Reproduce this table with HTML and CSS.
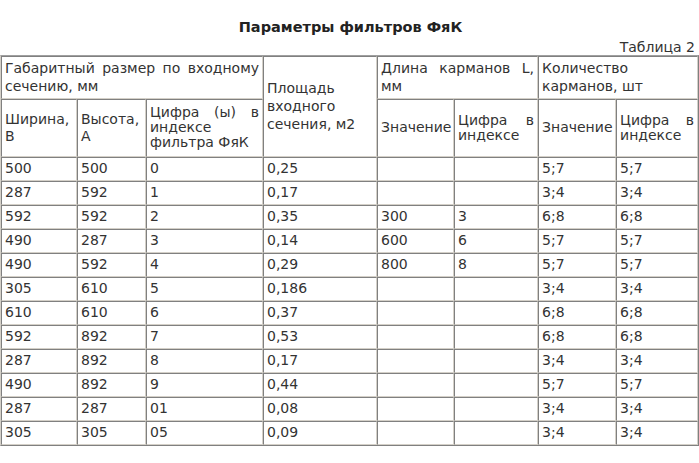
FILE: index.html
```html
<!DOCTYPE html>
<html lang="ru">
<head>
<meta charset="utf-8">
<title>Параметры фильтров ФяК</title>
<link rel="stylesheet" href="styles.css">
</head>
<body>
<div class="page">
  <div class="title">Параметры фильтров ФяК</div>
  <div class="caption">Таблица 2</div>
  <table class="params">
    <colgroup>
      <col class="c1"><col class="c2"><col class="c3"><col class="c4">
      <col class="c5"><col class="c6"><col class="c7"><col class="c8">
    </colgroup>
    <tr class="h1">
      <td colspan="3" class="just">Габаритный размер по входному сечению, мм</td>
      <td rowspan="2">Площадь входного сечения, м2</td>
      <td colspan="2" class="just">Длина карманов L, мм</td>
      <td colspan="2">Количество карманов, шт</td>
    </tr>
    <tr class="h2">
      <td>Ширина, В</td>
      <td>Высота, А</td>
      <td class="just tight">Цифра (ы) в индексе фильтра ФяК</td>
      <td>Значение</td>
      <td class="just tight">Цифра в индексе</td>
      <td>Значение</td>
      <td class="just tight">Цифра в индексе</td>
    </tr>
    <tr><td>500</td><td>500</td><td>0</td><td>0,25</td><td></td><td></td><td>5;7</td><td>5;7</td></tr>
    <tr><td>287</td><td>592</td><td>1</td><td>0,17</td><td></td><td></td><td>3;4</td><td>3;4</td></tr>
    <tr><td>592</td><td>592</td><td>2</td><td>0,35</td><td>300</td><td>3</td><td>6;8</td><td>6;8</td></tr>
    <tr><td>490</td><td>287</td><td>3</td><td>0,14</td><td>600</td><td>6</td><td>5;7</td><td>5;7</td></tr>
    <tr><td>490</td><td>592</td><td>4</td><td>0,29</td><td>800</td><td>8</td><td>5;7</td><td>5;7</td></tr>
    <tr><td>305</td><td>610</td><td>5</td><td>0,186</td><td></td><td></td><td>3;4</td><td>3;4</td></tr>
    <tr><td>610</td><td>610</td><td>6</td><td>0,37</td><td></td><td></td><td>6;8</td><td>6;8</td></tr>
    <tr><td>592</td><td>892</td><td>7</td><td>0,53</td><td></td><td></td><td>6;8</td><td>6;8</td></tr>
    <tr><td>287</td><td>892</td><td>8</td><td>0,17</td><td></td><td></td><td>3;4</td><td>3;4</td></tr>
    <tr><td>490</td><td>892</td><td>9</td><td>0,44</td><td></td><td></td><td>5;7</td><td>5;7</td></tr>
    <tr><td>287</td><td>287</td><td>01</td><td>0,08</td><td></td><td></td><td>3;4</td><td>3;4</td></tr>
    <tr><td>305</td><td>305</td><td>05</td><td>0,09</td><td></td><td></td><td>3;4</td><td>3;4</td></tr>
  </table>
</div>
</body>
</html>
```

FILE: styles.css
```css
html, body {
  margin: 0;
  padding: 0;
  background: #ffffff;
}

body {
  font-family: "DejaVu Sans", Verdana, sans-serif;
  font-size: 14px;
  color: #333333;
}

.page {
  width: 699px;
  padding-top: 18px;
}

.title {
  text-align: center;
  font-weight: bold;
  font-size: 14.5px;
  line-height: 19px;
  color: #222222;
  padding-left: 2px;
}

.caption {
  text-align: right;
  line-height: 16px;
  padding-right: 4px;
  margin-top: 2px;
}

.params {
  width: 698px;
  table-layout: fixed;
  border-collapse: separate;
  border-spacing: 0;
  border-top: 1px solid #a0a0a0;
  border-left: 1px solid #d4d0c8;
  border-right: 1px solid #808080;
  border-bottom: 1px solid #808080;
}

.c1 { width: 76px; }
.c2 { width: 69px; }
.c3 { width: 117px; }
.c4 { width: 114px; }
.c5 { width: 77px; }
.c6 { width: 84px; }
.c7 { width: 78px; }
.c8 { width: 82px; }

.params td {
  box-sizing: border-box;
  padding: 2px 3px 3px;
  line-height: 17px;
  height: 24px;
  vertical-align: middle;
  text-align: left;
  white-space: normal;
  border-top: 1px solid #808080;
  border-left: 1px solid #808080;
  border-right: 1px solid #d4d0c8;
  border-bottom: 1px solid #d4d0c8;
}

.params .h1 td {
  height: 42px;
  line-height: 18px;
}

.params .h2 td {
  height: 58px;
}

.params td.just {
  text-align: justify;
}

.params td.tight {
  line-height: 15px;
}
```
